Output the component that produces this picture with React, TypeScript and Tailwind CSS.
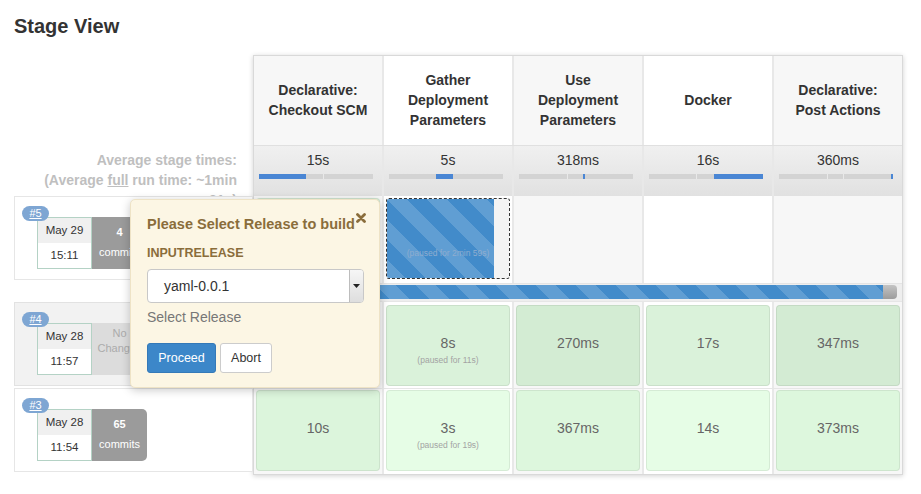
import React from "react";

const colBg = ["bg-[#f7f7f7]", "bg-white", "bg-[#f7f7f7]", "bg-white", "bg-[#f7f7f7]"];
const colSep = ["", "border-l-2 border-[#e8e8e8]", "border-l-2 border-[#e8e8e8]", "border-l-2 border-[#e8e8e8]", "border-l-2 border-[#e8e8e8]"];

const stripes =
  "bg-[#428bca] bg-[linear-gradient(45deg,rgba(255,255,255,0.16)_25%,transparent_25%,transparent_50%,rgba(255,255,255,0.16)_50%,rgba(255,255,255,0.16)_75%,transparent_75%,transparent)] bg-[length:40px_40px]";

const stages = [
  ["Declarative:", "Checkout SCM"],
  ["Gather", "Deployment", "Parameters"],
  ["Use", "Deployment", "Parameters"],
  ["Docker"],
  ["Declarative:", "Post Actions"],
];

const averages = [
  { time: "15s", fill: [0, 47], ticks: [64] },
  { time: "5s", fill: [47, 17], ticks: [] as number[] },
  { time: "318ms", fill: [64, 2], ticks: [48] },
  { time: "16s", fill: [65, 49], ticks: [47] },
  { time: "360ms", fill: [112, 2], ticks: [48, 64] },
];

type Cell = { bg: string; time?: string; paused?: string };

const build4: Cell[] = [
  { bg: "bg-[#d4edd4]" },
  { bg: "bg-[#daf2da]", time: "8s", paused: "(paused for 11s)" },
  { bg: "bg-[#d3ecd3]", time: "270ms" },
  { bg: "bg-[#daf2da]", time: "17s" },
  { bg: "bg-[#d3ebd3]", time: "347ms" },
];

const build3: Cell[] = [
  { bg: "bg-[#dcf5dc]", time: "10s" },
  { bg: "bg-[#e6fde6]", time: "3s", paused: "(paused for 19s)" },
  { bg: "bg-[#ddf7dd]", time: "367ms" },
  { bg: "bg-[#e6fde6]", time: "14s" },
  { bg: "bg-[#ddf7dd]", time: "373ms" },
];

function AvgBar({ fill, ticks }: { fill: number[]; ticks: number[] }) {
  return (
    <svg width="114" height="5" className="block">
      <rect width="114" height="5" fill="#d3d3d3" />
      {ticks.map((x) => (
        <rect key={x} x={x} width="1" height="5" fill="#e9e9e9" />
      ))}
      <rect x={fill[0]} width={fill[1]} height="5" fill="#4a86d4" />
    </svg>
  );
}

function StageCell({ cell }: { cell: Cell }) {
  return (
    <div
      className={`mx-[2px] flex h-[81px] flex-col items-center rounded-[4px] border border-[rgba(0,0,0,0.07)] pt-[28px] ${cell.bg}`}
    >
      <div className="text-[14px] leading-[18px] text-[#666]">{cell.time}</div>
      {cell.paused && (
        <div className="mt-[2px] text-[8.5px] leading-[12px] text-[#a3a3a3]">{cell.paused}</div>
      )}
    </div>
  );
}

function BuildRow({
  num,
  date,
  time,
  changes,
  grey,
  className,
}: {
  num: string;
  date: string;
  time: string;
  changes: string | null;
  grey?: boolean;
  className?: string;
}) {
  return (
    <div
      className={`relative ml-[14px] h-[84px] w-[239px] border ${
        grey ? "border-[#e2e2e2] bg-[#f2f2f2]" : "border-[#e6e6e6] bg-white"
      } ${className ?? ""}`}
    >
      <a className="absolute left-[7px] top-[9px] z-10 h-[15px] w-[27px] rounded-full bg-[#7ea6d3] text-center text-[11px] leading-[15px] text-white underline">
        {num}
      </a>
      <div className="ml-[22px] mt-[20px] flex">
        <div className="flex h-[52px] w-[55px] flex-col border border-[#b4d2c5] text-center text-[11.5px] text-[#333]">
          <div className="h-[25px] bg-[#f0f0f0] leading-[25px]">{date}</div>
          <div className="flex-1 bg-white leading-[25px]">{time}</div>
        </div>
        {changes ? (
          <div className="flex h-[52px] w-[55px] flex-col items-center rounded-r-[5px] bg-[#9b9b9b] pt-[5px] text-[11px] leading-[20px] text-white">
            <div className="font-bold">{changes}</div>
            <div>commits</div>
          </div>
        ) : (
          <div className="flex h-[52px] w-[55px] flex-col items-center rounded-r-[5px] bg-[#dcdcdc] pt-[3px] text-[11px] leading-[15px] text-[#ababab]">
            <div>No</div>
            <div>Changes</div>
          </div>
        )}
      </div>
    </div>
  );
}

function InputPopup() {
  return (
    <div className="absolute left-[130px] top-[199px] z-20 h-[189px] w-[250px] rounded-[5px] border border-[#eee3c6] bg-[#fcf6e4] pl-[16px] pt-[14px] shadow-[0_2px_10px_rgba(0,0,0,0.22)]">
      <svg width="10" height="10" viewBox="0 0 10 10" className="absolute right-[13px] top-[13px]">
        <path d="M1.5 1.5 L8.5 8.5 M8.5 1.5 L1.5 8.5" stroke="#8a6d3b" strokeWidth="2.8" strokeLinecap="round" />
      </svg>
      <div className="text-[14.5px] font-bold leading-[20px] text-[#8a6d3b]">Please Select Release to build</div>
      <div className="mt-[11px] text-[12.5px] font-bold leading-[16px] text-[#8a6d3b]">INPUTRELEASE</div>
      <div className="mt-[8px] flex h-[34px] w-[217px] items-stretch rounded-[4px] border border-[#c8c8c8] bg-white">
        <div className="flex-1 pl-[16px] text-[14px] leading-[32px] text-[#333]">yaml-0.0.1</div>
        <div className="flex w-[14px] items-center justify-center rounded-r-[3px] border-l border-[#bdbdbd] bg-linear-to-b from-[#f6f6f6] to-[#dedede]">
          <svg width="7" height="4" viewBox="0 0 7 4">
            <path d="M0 0 H7 L3.5 4 Z" fill="#222" />
          </svg>
        </div>
      </div>
      <div className="mt-[4px] text-[14px] leading-[20px] text-[#777]">Select Release</div>
      <div className="mt-[16px] flex gap-[4px]">
        <button className="h-[30px] w-[69px] rounded-[3px] border border-[#3479b8] bg-[#3c87c9] text-[12.5px] text-white">
          Proceed
        </button>
        <button className="h-[30px] w-[52px] rounded-[3px] border border-[#cccccc] bg-white text-[12.5px] text-[#333]">
          Abort
        </button>
      </div>
    </div>
  );
}

export default function App() {
  return (
    <div className="relative h-[494px] w-[921px] overflow-hidden bg-white pt-[14px] font-['Liberation_Sans',Arial,Helvetica,sans-serif]">
      <h2 className="pl-[14px] text-[20px] font-bold leading-[24px] text-[#333]">Stage View</h2>

      <div className="mt-[17px] flex">
        {/* left: run labels */}
        <div className="w-[253px] shrink-0">
          <div className="h-[90px]" />
          <div className="h-[51px] pr-[16px] pt-[5px] text-right text-[14px] font-bold leading-[20px] text-[#bfbfbf]">
            <div>Average stage times:</div>
            <div>
              (Average <span className="underline">full</span> run time: ~1min
            </div>
            <div>21s)</div>
          </div>
          <BuildRow num="#5" date="May 29" time="15:11" changes="4" />
          <BuildRow num="#4" date="May 28" time="11:57" changes={null} grey className="mt-[22px] h-[83px]" />
          <BuildRow num="#3" date="May 28" time="11:54" changes="65" className="mt-[2px] h-[83px]" />
        </div>

        {/* right: stage grid */}
        <div className="w-[650px] shrink-0 border border-[#d9d9d9] shadow-[0_1px_5px_rgba(0,0,0,0.18)]">
          <div className="grid h-[89px] grid-cols-[128px_130px_130px_130px_130px]">
            {stages.map((lines, i) => (
              <div
                key={i}
                className={`flex flex-col items-center justify-center pb-[2px] text-center text-[14px] font-bold leading-[20px] text-[#333] ${colBg[i]} ${colSep[i]}`}
              >
                {lines.map((l) => (
                  <div key={l}>{l}</div>
                ))}
              </div>
            ))}
          </div>

          <div className="grid h-[51px] grid-cols-[128px_130px_130px_130px_130px] border-t border-[#e0e0e0] bg-linear-to-b from-[#f0f0f0] to-[#e1e1e1]">
            {averages.map((a, i) => (
              <div key={i} className={`flex flex-col items-center pt-[4px] ${colSep[i]}`}>
                <div className="text-[14px] leading-[20px] text-[#333]">{a.time}</div>
                <div className="mt-[4px] pr-[4px]">
                  <AvgBar fill={a.fill} ticks={a.ticks} />
                </div>
              </div>
            ))}
          </div>

          {/* build #5, running */}
          <div className="grid h-[87px] grid-cols-[128px_130px_130px_130px_130px]">
            <div className={`pt-[2px] ${colBg[0]} ${colSep[0]}`}>
              <div className="mx-[2px] h-[81px] rounded-[4px] border border-[rgba(0,0,0,0.07)] bg-[#dff6df]" />
            </div>
            <div className={`pt-[2px] ${colBg[1]} ${colSep[1]}`}>
              <div className="relative mx-[2px] h-[81px] overflow-hidden rounded-[3px] border border-dashed border-[#333] bg-[#f4f4f4]">
                <div className={`absolute inset-y-0 left-0 w-[107px] ${stripes}`} />
                <div className="relative flex flex-col items-center pt-[28px]">
                  <div className="h-[18px]" />
                  <div className="mt-[2px] text-[8.5px] leading-[12px] text-[#8fadcf]">(paused for 2min 59s)</div>
                </div>
              </div>
            </div>
            <div className={`${colBg[2]} ${colSep[2]}`} />
            <div className={`${colBg[3]} ${colSep[3]}`} />
            <div className={`${colBg[4]} ${colSep[4]}`} />
          </div>
          <div className="h-[18px] border-t border-[#e4e4e4] bg-[#eeeeee] pl-[2px] pr-[5px] pt-[1px]">
            <div className="flex h-[14px] overflow-hidden rounded-[4px] bg-linear-to-b from-[#c4c4c4] to-[#9c9c9c]">
              <div className={`h-full w-[627px] ${stripes}`} />
            </div>
          </div>

          {/* build #4 */}
          <div className="grid h-[87px] grid-cols-[128px_130px_130px_130px_130px] border-t border-[#e6e6e6]">
            {build4.map((c, i) => (
              <div key={i} className={`pt-[3px] ${colBg[i]} ${colSep[i]}`}>
                <StageCell cell={c} />
              </div>
            ))}
          </div>

          {/* build #3 */}
          <div className="grid h-[86px] grid-cols-[128px_130px_130px_130px_130px] border-t border-[#e6e6e6]">
            {build3.map((c, i) => (
              <div key={i} className={`pt-[1px] ${colBg[i]} ${colSep[i]}`}>
                <StageCell cell={c} />
              </div>
            ))}
          </div>
        </div>
      </div>

      <InputPopup />
    </div>
  );
}
